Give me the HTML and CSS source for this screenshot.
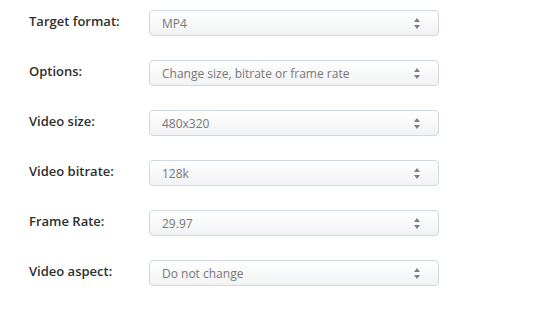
FILE: index.html
```html
<!DOCTYPE html>
<html>
<head>
<meta charset="utf-8">
<link rel="stylesheet" href="styles.css">
</head>
<body>
<div class="form">
  <div class="row"><div class="label">Target format:</div><div class="select"><span>MP4</span><i class="arrows"></i></div></div>
  <div class="row"><div class="label">Options:</div><div class="select"><span>Change size, bitrate or frame rate</span><i class="arrows"></i></div></div>
  <div class="row"><div class="label">Video size:</div><div class="select"><span>480x320</span><i class="arrows"></i></div></div>
  <div class="row"><div class="label">Video bitrate:</div><div class="select"><span>128k</span><i class="arrows"></i></div></div>
  <div class="row"><div class="label">Frame Rate:</div><div class="select"><span>29.97</span><i class="arrows"></i></div></div>
  <div class="row"><div class="label">Video aspect:</div><div class="select"><span>Do not change</span><i class="arrows"></i></div></div>
</div>
</body>
</html>
```
FILE: styles.css
```css
html, body { margin: 0; padding: 0; background: #fff; }
body { font-family: "Open Sans", "Liberation Sans", sans-serif; }
.form { padding: 10px 0 0 29px; display: flex; flex-direction: column; gap: 24px; }
.row { display: flex; align-items: flex-start; height: 26px; }
.label { width: 120px; font-size: 13px; font-weight: 600; color: #2e2e2e; line-height: 20px; padding-top: 1px; }
.select {
  box-sizing: border-box;
  width: 290px; height: 26px;
  border: 1px solid #d0d8e2; border-radius: 4px;
  background: linear-gradient(#ffffff, #f1f2f3);
  display: flex; align-items: center; justify-content: space-between;
  padding: 0 18px 0 12px;
  font-size: 12px; color: #777;
}
.select span { line-height: 24px; padding-top: 1px; }
.arrows { position: relative; width: 6px; height: 11px; display: block; margin-top: 1px; }
.arrows::before, .arrows::after { content: ""; position: absolute; left: 0; border-left: 3px solid transparent; border-right: 3px solid transparent; }
.arrows::before { top: 0; border-bottom: 4px solid #7a7e86; }
.arrows::after { bottom: 0; border-top: 4px solid #7a7e86; }
```
